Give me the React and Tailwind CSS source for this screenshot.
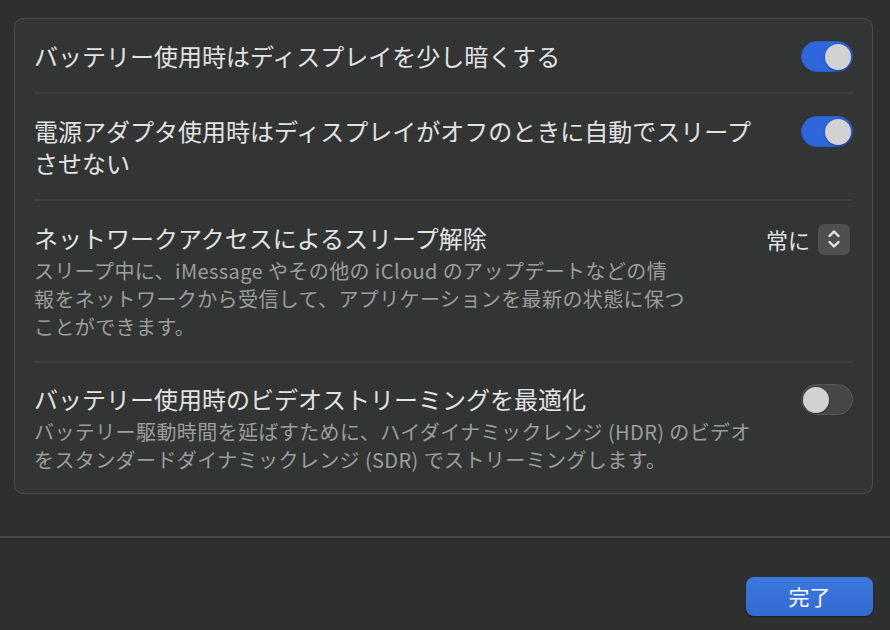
import React from 'react';

const Toggle = ({ on }) => (
  <div
    className={
      'flex h-[31px] w-[52px] shrink-0 items-center rounded-full border px-[1px] ' +
      (on ? 'justify-end border-[#2a5cc8] bg-[#2f66db]' : 'justify-start border-[#565857] bg-[#454746]')
    }
  >
    <div className="h-[26px] w-[26px] rounded-full bg-[#d2d2d2] shadow-[0_1px_2px_rgba(0,0,0,0.35)]" />
  </div>
);

const Stepper = () => (
  <div className="flex items-center gap-2 pr-[3px]">
    <span className="text-[22px] leading-[32px] text-[#e2e2e2]">常に</span>
    <div className="flex h-[31px] w-[32px] items-center justify-center rounded-[6px] bg-[#4e504f]">
      <svg width="14" height="22" viewBox="0 0 14 22" fill="none" stroke="#e6e6e6" strokeWidth="2.4" strokeLinecap="round" strokeLinejoin="round">
        <path d="M2.5 8 L7 3.5 L11.5 8" />
        <path d="M2.5 14 L7 18.5 L11.5 14" />
      </svg>
    </div>
  </div>
);

const Row = ({ title, desc, control, last }) => (
  <div className={'flex items-start justify-between gap-6 ' + (last ? 'pt-[20px] pb-[19px]' : 'border-b-2 border-[#3d3f3e] pt-[21px] pb-[20px]')}>
    <div className="flex flex-col gap-[3px]">
      <div className="text-[24px] leading-[32px] text-[#e2e2e2]">{title}</div>
      {desc && <div className="text-[20px] leading-[28px] tracking-[0.4px] text-[#9c9d9c]">{desc}</div>}
    </div>
    <div className="pt-[1px]">{control}</div>
  </div>
);

export default function App() {
  return (
    <div
      className="flex h-[630px] w-[890px] flex-col bg-[#2e302f] pt-[18px]"
      style={{ fontFamily: '"Noto Sans CJK JP", "Noto Sans", sans-serif' }}
    >
      <div className="ml-[14px] w-[859px] rounded-[9px] border border-[#4b4d4c] bg-[#333534] px-[19px]">
        <Row
          title="バッテリー使用時はディスプレイを少し暗くする"
          control={<Toggle on />}
        />
        <Row
          title={<>電源アダプタ使用時はディスプレイがオフのときに自動でスリープ<br />させない</>}
          control={<Toggle on />}
        />
        <Row
          title="ネットワークアクセスによるスリープ解除"
          desc={
            <>
              スリープ中に、iMessage やその他の iCloud のアップデートなどの情<br />
              報をネットワークから受信して、アプリケーションを最新の状態に保つ<br />
              ことができます。
            </>
          }
          control={<Stepper />}
        />
        <Row
          last
          title="バッテリー使用時のビデオストリーミングを最適化"
          desc={
            <>
              バッテリー駆動時間を延ばすために、ハイダイナミックレンジ (HDR) のビデオ<br />
              をスタンダードダイナミックレンジ (SDR) でストリーミングします。
            </>
          }
          control={<Toggle />}
        />
      </div>

      <div className="mt-[42px] h-[2px] w-full bg-[#454746]" />

      <div className="flex justify-end px-[17px] pt-[39px]">
        <button className="flex h-[39px] w-[127px] items-center justify-center rounded-[8px] bg-gradient-to-b from-[#3c78dc] to-[#336bd2] text-[21px] text-white shadow-[0_1px_2px_rgba(0,0,0,0.4)]">
          完了
        </button>
      </div>
    </div>
  );
}
